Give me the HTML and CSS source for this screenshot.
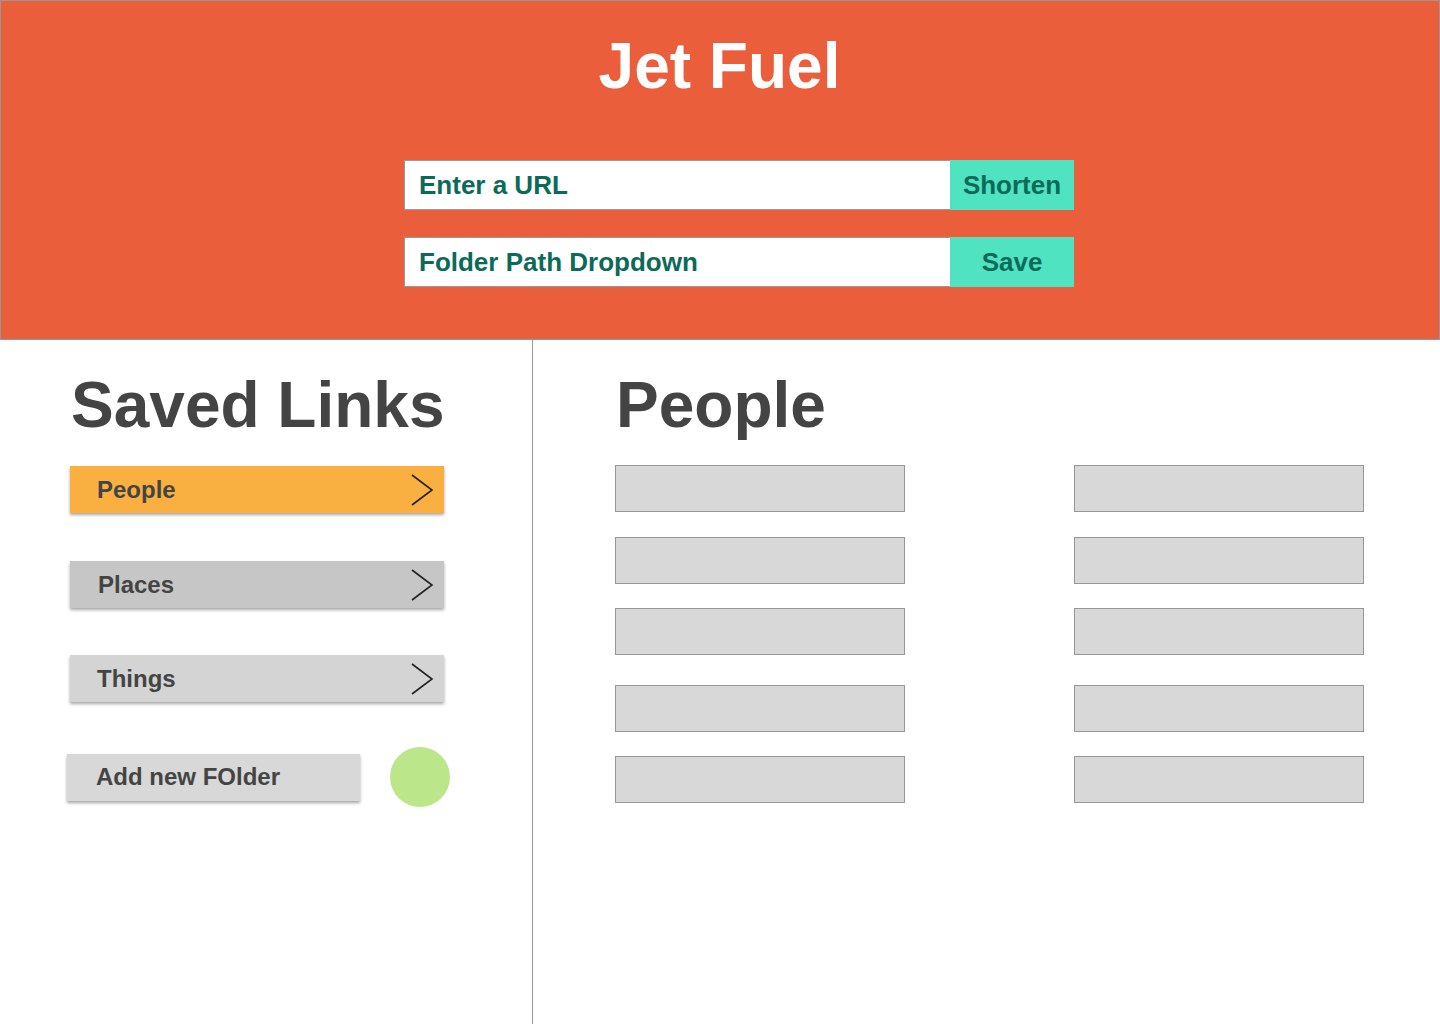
FILE: index.html
```html
<!DOCTYPE html>
<html>
<head>
<meta charset="utf-8">
<title>Jet Fuel</title>
<link rel="stylesheet" href="styles.css">
</head>
<body>
<header class="top">
  <h1 class="brand">Jet Fuel</h1>
  <div class="field">
    <span class="field-text">Enter a URL</span>
    <button class="field-btn">Shorten</button>
  </div>
  <div class="field field-2">
    <span class="field-text">Folder Path Dropdown</span>
    <button class="field-btn">Save</button>
  </div>
</header>
<main class="main">
  <aside class="side">
    <h2 class="heading">Saved Links</h2>
    <div class="folder folder-active"><span>People</span><svg class="chev" width="24" height="32" viewBox="0 0 24 32"><polyline points="2,1 22,16 2,31" fill="none" stroke="#222" stroke-width="1.6"/></svg></div>
    <div class="folder folder-places"><span>Places</span><svg class="chev" width="24" height="32" viewBox="0 0 24 32"><polyline points="2,1 22,16 2,31" fill="none" stroke="#222" stroke-width="1.6"/></svg></div>
    <div class="folder folder-things"><span>Things</span><svg class="chev" width="24" height="32" viewBox="0 0 24 32"><polyline points="2,1 22,16 2,31" fill="none" stroke="#222" stroke-width="1.6"/></svg></div>
    <div class="add-row">
      <div class="add-btn">Add new FOlder</div>
      <div class="add-dot"></div>
    </div>
  </aside>
  <section class="content">
    <h2 class="heading heading-right">People</h2>
    <div class="grid">
      <div class="cell"></div><div class="cell"></div>
      <div class="cell cell-r2"></div><div class="cell cell-r2"></div>
      <div class="cell"></div><div class="cell"></div>
      <div class="cell cell-gap"></div><div class="cell cell-gap"></div>
      <div class="cell"></div><div class="cell"></div>
    </div>
  </section>
</main>
</body>
</html>
```
FILE: styles.css
```css
* { box-sizing: border-box; }
html, body { margin: 0; padding: 0; }
body {
  width: 1440px;
  height: 1024px;
  overflow: hidden;
  background: #fff;
  font-family: "Liberation Sans", Arial, sans-serif;
}
.top {
  height: 340px;
  background: #EB5E3B;
  border: 1px solid #979797;
  display: flex;
  flex-direction: column;
  align-items: center;
  padding-top: 33px;
}
.brand {
  margin: 0 0 0 -1px;
  font-size: 64px;
  line-height: 64px;
  font-weight: 700;
  color: #fff;
}
.field {
  margin-top: 62px;
  margin-left: 38px;
  width: 670px;
  height: 50px;
  background: #fff;
  border: 1px solid #9a9a9a;
  display: flex;
  align-items: stretch;
}
.field-2 { margin-top: 27px; }
.field-text {
  flex: 1;
  display: flex;
  align-items: center;
  padding-left: 14px;
  font-size: 26px;
  font-weight: 700;
  color: #0B6A58;
}
.field-btn {
  width: 124px;
  margin: -1px -1px -1px 0;
  border: 0;
  background: #50E3C2;
  color: #0B6A58;
  font-family: "Liberation Sans", Arial, sans-serif;
  font-size: 26px;
  font-weight: 700;
  padding: 0;
}
.main {
  display: flex;
  height: 684px;
}
.side {
  width: 533px;
  border-right: 1px solid #979797;
  padding: 33px 0 0 70px;
}
.heading {
  margin: 0 0 29px 1px;
  font-size: 64px;
  line-height: 64px;
  font-weight: 700;
  color: #444;
}
.folder {
  width: 374px;
  height: 47px;
  display: flex;
  align-items: center;
  justify-content: space-between;
  padding: 0 10px 0 27px;
  font-size: 24px;
  font-weight: 700;
  color: #444;
  box-shadow: 0 2px 3px rgba(0,0,0,0.35);
  margin-bottom: 48px;
}
.folder-active { background: #F9B040; }
.folder-places { background: #C6C6C6; margin-bottom: 47px; padding-left: 28px; }
.folder-things { background: #D4D4D4; margin-bottom: 45px; }
.chev { display: block; }
.add-row {
  display: flex;
  align-items: center;
  margin-left: -3px;
}
.add-btn {
  width: 293px;
  height: 47px;
  background: #D8D8D8;
  box-shadow: 0 2px 3px rgba(0,0,0,0.35);
  display: flex;
  align-items: center;
  padding-left: 29px;
  font-size: 24px;
  font-weight: 700;
  color: #444;
}
.add-dot {
  width: 60px;
  height: 60px;
  border-radius: 50%;
  background: #BCE68A;
  margin-left: 30px;
}
.content {
  flex: 1;
  padding: 33px 0 0 82px;
}
.heading-right { margin-bottom: 28px; }
.grid {
  display: grid;
  grid-template-columns: 290px 290px;
  column-gap: 169px;
  row-gap: 24px;
}
.cell {
  height: 47px;
  background: #D8D8D8;
  border: 1px solid #979797;
}
.cell-r2 { margin-top: 1px; }
.cell-gap { margin-top: 6px; }
```
